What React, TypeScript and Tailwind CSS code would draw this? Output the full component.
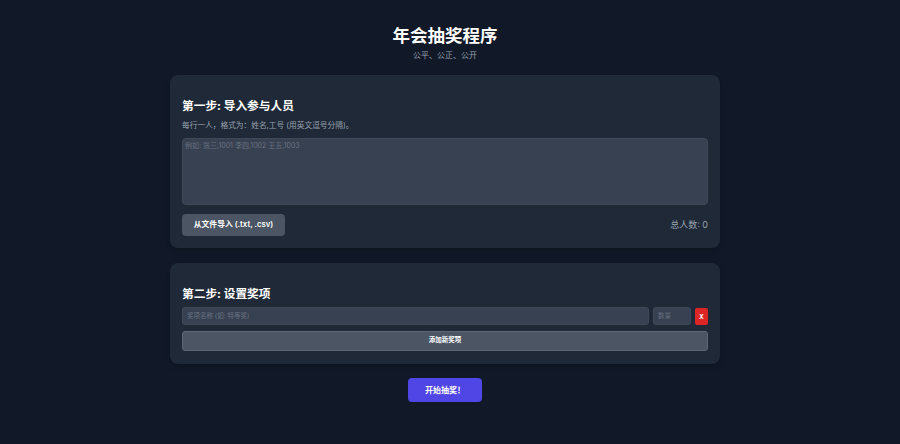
const font = "font-['Inter','Noto_Sans_CJK_SC',sans-serif]";

export default function App() {
  return (
    <div className={`${font} min-h-screen bg-[#111827] pr-[10px] text-white`}>
      <div className="mx-auto w-[550px] pt-[25px]">
        <header className="mb-[15px] text-center">
          <h1 className="text-[17.5px] leading-[22px] font-bold">年会抽奖程序</h1>
          <p className="mt-[3px] text-[8px] leading-[10px] text-gray-400">公平、公正、公开</p>
        </header>

        <section className="rounded-[8px] bg-[#1f2937] px-[12px] pt-[23px] pb-[12px] shadow-md">
          <h2 className="text-[11.7px] leading-[16px] font-bold">第一步: 导入参与人员</h2>
          <p className="mt-[6px] text-[7.7px] leading-[12px] text-gray-400">
            每行一人，格式为：姓名,工号 (用英文逗号分隔)。
          </p>
          <textarea
            readOnly
            placeholder="例如: 张三,1001 李四,1002 王五,1003"
            className="mt-[6px] block h-[67px] w-full resize-none rounded-[4px] border border-[#3f4858] bg-[#374151] px-[2px] py-[2px] text-[7px] leading-[9px] outline-none placeholder:text-gray-500"
          />
          <div className="mt-[9px] flex items-center justify-between">
            <button
              type="button"
              className="h-[22px] w-[103px] rounded-[4px] bg-[#4b5563] text-[7.8px] font-semibold"
            >
              从文件导入 (.txt, .csv)
            </button>
            <span className="text-[9px] text-gray-400">总人数: 0</span>
          </div>
        </section>

        <section className="mt-[15px] rounded-[8px] bg-[#1f2937] px-[12px] pt-[23px] pb-[13px] shadow-md">
          <h2 className="text-[11.7px] leading-[16px] font-bold">第二步: 设置奖项</h2>
          <div className="mt-[5px] flex items-center gap-[4px]">
            <input
              readOnly
              placeholder="奖项名称 (如: 特等奖)"
              className="h-[18px] min-w-0 flex-1 rounded-[3px] border border-[#3f4858] bg-[#374151] px-[4px] text-[6.5px] outline-none placeholder:text-gray-500"
            />
            <input
              readOnly
              placeholder="数量"
              className="h-[18px] w-[38px] rounded-[3px] border border-[#3f4858] bg-[#374151] px-[4px] text-[6.5px] outline-none placeholder:text-gray-500"
            />
            <button
              type="button"
              className="h-[17px] w-[13px] rounded-[2px] bg-[#dc2626] text-[6px] font-bold"
            >
              X
            </button>
          </div>
          <button
            type="button"
            className="mt-[6px] block h-[20px] w-full rounded-[3px] border border-[#5e6875] bg-[#4b5563] text-[6.5px] font-semibold"
          >
            添加新奖项
          </button>
        </section>

        <div className="mt-[14px] flex justify-center">
          <button
            type="button"
            className="h-[24px] w-[74px] rounded-[4px] bg-[#4f46e5] text-[8px] font-bold"
          >
            开始抽奖！
          </button>
        </div>
      </div>
    </div>
  );
}
